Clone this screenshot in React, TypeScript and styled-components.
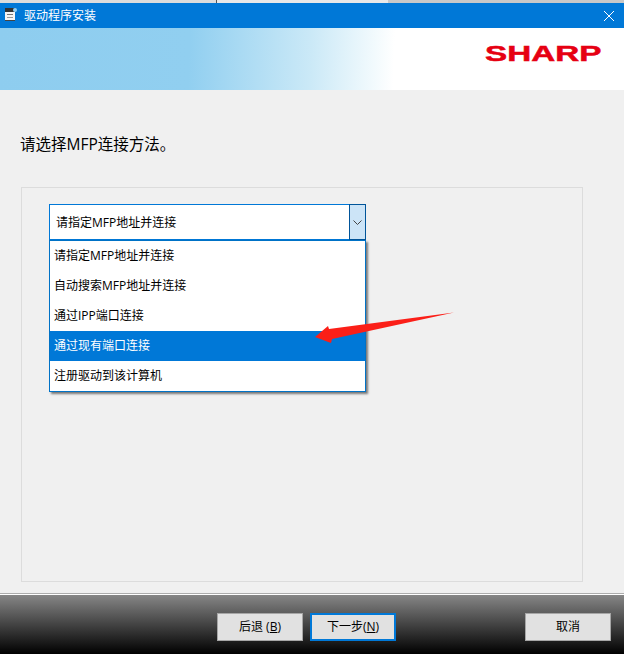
import React from 'react';
import styled, { createGlobalStyle } from 'styled-components';

const GlobalStyle = createGlobalStyle`
  html, body {
    margin: 0;
    padding: 0;
    background: #f0f0f0;
  }
  * {
    box-sizing: border-box;
  }
  body {
    font-family: "Open Sans", "Noto Sans CJK SC", "Liberation Sans", sans-serif;
    font-size: 12px;
    color: #000;
  }
`;

const Window = styled.div`
  position: relative;
  width: 624px;
  height: 654px;
  display: flex;
  flex-direction: column;
  overflow: hidden;
`;

const TopStrip = styled.div`
  height: 3px;
  background: linear-gradient(90deg, #dcdcdc 0 216px, #555 216px 217px, #e8e8e8 217px 388px, #c8c8c8 388px);
`;

const TitleBar = styled.div`
  height: 25px;
  background: #0078d7;
  color: #fff;
  display: flex;
  align-items: center;
  padding: 0 10px 0 5px;
`;

const PrinterIcon = styled.svg`
  margin-bottom: 2px;
`;

const TitleText = styled.span`
  margin-left: 7px;
  flex: 1;
  line-height: 25px;
`;

const Banner = styled.div`
  height: 62px;
  background: linear-gradient(92deg, #8ecdef 0, #91cff0 190px, #cbe9f7 312px, #f2fafd 375px, #fff 395px);
  display: flex;
  align-items: center;
  justify-content: flex-end;
  padding: 0 24px 10px 0;
`;

const Logo = styled.span`
  display: block;
  width: 115px;
  font-family: "Liberation Sans", sans-serif;
  font-weight: 700;
  font-size: 22px;
  line-height: 22px;
  color: #e60012;
  -webkit-text-stroke: 0.5px #e60012;
  transform: scaleX(1.51);
  transform-origin: left center;
  white-space: nowrap;
`;

const Content = styled.main`
  flex: 1;
  background: #f0f0f0;
  padding: 43px 41px 11px 21px;
  display: flex;
  flex-direction: column;
`;

const Heading = styled.h1`
  margin: 0 0 32px -1px;
  font-size: 15.5px;
  line-height: 22px;
  font-weight: 400;
`;

const GroupBox = styled.section`
  flex: 1;
  border: 1px solid #dcdcdc;
  padding: 16px 216px 0 27px;
`;

const Combo = styled.div`
  position: relative;
  height: 36px;
  background: #fff;
  border: 1px solid #0078d7;
  display: flex;
  align-items: center;
  justify-content: space-between;
  padding: 0 0 1px 6px;
`;

const ComboButton = styled.div`
  width: 17px;
  height: 36px;
  margin: 0 -1px -1px;
  background: #cce4f7;
  border: 1px solid #005499;
  display: flex;
  align-items: center;
  justify-content: center;
`;

const DropList = styled.ul`
  position: absolute;
  z-index: 1;
  top: 35px;
  left: -1px;
  width: 317px;
  margin: 0;
  padding: 0;
  list-style: none;
  background: #fff;
  border: 1px solid #0072c6;
  box-shadow: 2px 2px 2px rgba(0, 0, 0, 0.5);
`;

const DropItem = styled.li<{ $active?: boolean }>`
  height: 30px;
  line-height: 30px;
  padding-left: 4px;
  background: ${props => (props.$active ? '#0078d7' : '#fff')};
  color: ${props => (props.$active ? '#fff' : '#000')};
`;

const ArrowMark = styled.svg`
  position: absolute;
  z-index: 2;
  left: 310px;
  top: 306px;
`;

const Footer = styled.footer`
  height: 61px;
  flex: none;
  border-top: 1px solid #adadad;
  background: linear-gradient(180deg, #fff 0 1px, #868686 1px, #000 100%);
  display: flex;
  align-items: flex-start;
  padding: 19px 13px 0 217px;
`;

const Button = styled.button<{ $primary?: boolean }>`
  width: 86px;
  height: 28px;
  padding: 0 0 2px;
  font: inherit;
  color: #000;
  background: #e1e1e1;
  border: ${props => (props.$primary ? '2px solid #0078d7' : '1px solid #a6a6a6')};
  margin-left: ${props => (props.$primary ? '7px' : '0')};

  &:last-child {
    margin-left: auto;
  }
`;

const items = [
  '请指定MFP地址并连接',
  '自动搜索MFP地址并连接',
  '通过IPP端口连接',
  '通过现有端口连接',
  '注册驱动到该计算机',
];

function App() {
  return (
    <Window>
      <GlobalStyle />
      <TopStrip />
      <TitleBar>
        <PrinterIcon width="12" height="14" viewBox="0 0 12 14">
          <rect x="0" y="0" width="10" height="4" fill="#333" />
          <rect x="0" y="4" width="10" height="9" fill="#f4f4f4" />
          <rect x="2" y="6" width="6" height="1" fill="#777" />
          <rect x="2" y="9" width="6" height="1" fill="#999" />
          <rect x="0" y="12" width="10" height="1" fill="#444" />
          <circle cx="10" cy="2" r="2" fill="#8fd0f5" />
        </PrinterIcon>
        <TitleText>驱动程序安装</TitleText>
        <svg width="10" height="10" viewBox="0 0 10 10">
          <path d="M0 0L10 10M10 0L0 10" stroke="#fff" strokeWidth="1" fill="none" />
        </svg>
      </TitleBar>
      <Banner>
        <Logo>SHARP</Logo>
      </Banner>
      <Content>
        <Heading>请选择MFP连接方法。</Heading>
        <GroupBox>
          <Combo>
            <span>{items[0]}</span>
            <ComboButton>
              <svg width="9" height="5" viewBox="0 0 9 5">
                <path d="M0.5 0.5L4.5 4.5L8.5 0.5" stroke="#444" strokeWidth="1" fill="none" />
              </svg>
            </ComboButton>
            <DropList>
              {items.map((item, i) => (
                <DropItem key={item} $active={i === 3}>
                  {item}
                </DropItem>
              ))}
            </DropList>
          </Combo>
        </GroupBox>
      </Content>
      <Footer>
        <Button>后退 (<u>B</u>)</Button>
        <Button $primary>下一步(<u>N</u>)</Button>
        <Button>取消</Button>
      </Footer>
      <ArrowMark width="150" height="40" viewBox="310 306 150 40">
        <polygon points="315,337 328,326 329,329 454,312.5 332,339 331,343" fill="#fb1f18" />
      </ArrowMark>
    </Window>
  );
}

export default App;
